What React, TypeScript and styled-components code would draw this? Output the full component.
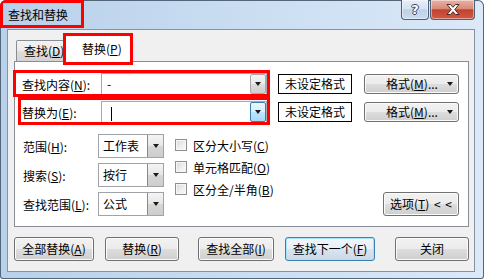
import React from "react";
import styled, { createGlobalStyle, css } from "styled-components";

const GlobalStyle = createGlobalStyle`
  html, body {
    margin: 0;
    padding: 0;
    background: #ffffff;
  }
  body {
    font-family: "Noto Sans CJK SC", "Liberation Sans", sans-serif;
    font-size: 12px;
    color: #000;
  }
  u {
    text-underline-offset: 1px;
  }
`;

// red annotation box drawn over a part of the dialog
const redBox = css<{ $box?: [number, number, number, number] }>`
  position: relative;
  &::after {
    content: "";
    position: absolute;
    pointer-events: none;
    border: 3px solid #ff0000;
    top: ${(p) => (p.$box ? p.$box[0] : -3)}px;
    right: ${(p) => (p.$box ? p.$box[1] : -3)}px;
    bottom: ${(p) => (p.$box ? p.$box[2] : -3)}px;
    left: ${(p) => (p.$box ? p.$box[3] : -3)}px;
  }
`;

const buttonFace = css`
  box-sizing: border-box;
  border: 1px solid #707070;
  border-radius: 3px;
  background: linear-gradient(
    180deg,
    #f2f2f2 0%,
    #ebebeb 50%,
    #dddddd 51%,
    #cfcfcf 100%
  );
  box-shadow: inset 0 0 0 1px #fbfbfb;
`;

const Window = styled.div`
  width: 484px;
  height: 279px;
  box-sizing: border-box;
  display: flex;
  flex-direction: column;
  background: linear-gradient(90deg, #b8d0ea 0%, #c8dcf1 45%, #dbe9f8 100%);
  box-shadow: inset 0 0 0 1px #55657a;
  border-radius: 6px 6px 3px 3px;
  overflow: hidden;
`;

const TitleBar = styled.div`
  height: 29px;
  display: flex;
  justify-content: space-between;
  align-items: flex-start;
`;

const Title = styled.div`
  box-sizing: border-box;
  width: 84px;
  height: 28px;
  border: 3px solid #ff0000;
  padding-left: 5px;
  line-height: 23px;
  font-size: 12px;
  color: #000;
`;

const CaptionButtons = styled.div`
  display: flex;
  gap: 1px;
  margin-right: 9px;
`;

const CaptionButton = styled.div<{ $close?: boolean }>`
  box-sizing: border-box;
  width: ${(p) => (p.$close ? 45 : 28)}px;
  height: 20px;
  border: 1px solid #4f5f73;
  border-top: none;
  border-radius: 0 0 4px 4px;
  display: flex;
  align-items: center;
  justify-content: center;
  background: ${(p) =>
    p.$close
      ? "linear-gradient(180deg, #e9b1a5 0%, #d98b7a 45%, #c4422e 52%, #cf5a44 100%)"
      : "linear-gradient(180deg, #e6eef8 0%, #d6e3f2 45%, #bfd1e7 52%, #cbdcee 100%)"};
  box-shadow: inset 0 0 0 1px rgba(255, 255, 255, 0.45);
`;

const HelpGlyph = styled.span`
  font-family: "DejaVu Sans", sans-serif;
  font-weight: bold;
  font-size: 13px;
  line-height: 14px;
  color: #ffffff;
  text-shadow: 1px 0 0 #3a4658, -1px 0 0 #3a4658, 0 1px 0 #3a4658,
    0 -1px 0 #3a4658;
`;

const Client = styled.div`
  flex: 1;
  margin: 0 9px 7px 7px;
  box-sizing: border-box;
  background: #f0f0f0;
  border: 1px solid #8494a8;
  padding: 0 5px 0 6px;
  display: flex;
  flex-direction: column;
`;

const TabStrip = styled.div`
  height: 31px;
  display: flex;
  align-items: flex-end;
  padding-left: 2px;
`;

const Tab = styled.div<{ $active?: boolean }>`
  box-sizing: border-box;
  border: 1px solid #898c95;
  border-bottom: none;
  border-radius: 2px 2px 0 0;
  white-space: nowrap;
  ${(p) =>
    p.$active
      ? css`
          width: 66px;
          height: 27px;
          margin-left: -2px;
          margin-bottom: -1px;
          padding-left: 16px;
          line-height: 26px;
          background: #ffffff;
          z-index: 1;
          ${redBox}
        `
      : css`
          width: 51px;
          height: 21px;
          padding-left: 7px;
          line-height: 20px;
          overflow: hidden;
          background: linear-gradient(180deg, #f3f3f3 0%, #ebebeb 50%, #dedede 51%, #d3d3d3 100%);
        `}
`;

const Panel = styled.div`
  box-sizing: border-box;
  height: 166px;
  background: #ffffff;
  border: 1px solid #898c95;
  padding: 11px 9px 0 1px;
  display: flex;
  flex-direction: column;
`;

const FindRow = styled.div<{ $gap?: number }>`
  display: flex;
  align-items: center;
  height: 22px;
  margin-top: ${(p) => p.$gap ?? 0}px;
`;

const Field = styled.div<{ $box?: [number, number, number, number] }>`
  box-sizing: border-box;
  width: 251px;
  height: 22px;
  padding-left: 6px;
  display: flex;
  align-items: center;
  ${redBox}
`;

const FieldLabel = styled.span`
  width: 79px;
  white-space: nowrap;
`;

const Combo = styled.div`
  flex: 1;
  box-sizing: border-box;
  height: 22px;
  border: 1px solid #a6abb3;
  background: #ffffff;
  display: flex;
  align-items: center;
`;

const ComboText = styled.span`
  flex: 1;
  padding-left: 5px;
  line-height: 18px;
`;

const Caret = styled.span`
  display: inline-block;
  width: 1px;
  height: 14px;
  margin-left: 4px;
  background: #000;
  vertical-align: middle;
`;

const ArrowBox = styled.div<{ $hot?: boolean }>`
  box-sizing: border-box;
  width: 16px;
  height: 100%;
  display: flex;
  align-items: center;
  justify-content: center;
  border: 1px solid ${(p) => (p.$hot ? "#3c7fb1" : "#a9a9a9")};
  border-radius: 2px;
  background: ${(p) =>
    p.$hot
      ? "linear-gradient(180deg, #eaf6fd 0%, #d9f0fc 50%, #bee6fd 51%, #a7d9f5 100%)"
      : "linear-gradient(180deg, #f2f2f2 0%, #ebebeb 50%, #dddddd 51%, #cfcfcf 100%)"};
`;

const Triangle = styled.span`
  width: 0;
  height: 0;
  border-left: 3.5px solid transparent;
  border-right: 3.5px solid transparent;
  border-top: 4px solid #1a1a1a;
`;

const FormatState = styled.div`
  box-sizing: border-box;
  width: 74px;
  height: 20px;
  margin-left: 11px;
  border: 1px solid #000;
  background: #ffffff;
  text-align: center;
  line-height: 18px;
  white-space: nowrap;
`;

const FormatButton = styled.div`
  ${buttonFace}
  width: 95px;
  height: 20px;
  margin-left: 12px;
  display: flex;
  align-items: center;
  padding: 0 5px 0 12px;
  white-space: nowrap;
`;

const FormatText = styled.span`
  flex: 1;
  text-align: center;
  line-height: 18px;
`;

const OptionsArea = styled.div`
  display: flex;
  margin-top: 11px;
`;

const ScopeGrid = styled.div`
  display: grid;
  grid-template-columns: 75px 66px;
  grid-auto-rows: 24px;
  row-gap: 5px;
  align-items: center;
  padding-left: 7px;
`;

const Select = styled.div`
  box-sizing: border-box;
  height: 24px;
  border: 1px solid #a0a3a8;
  background: #ffffff;
  display: flex;
  align-items: stretch;
`;

const SelectText = styled.span`
  flex: 1;
  padding-left: 4px;
  line-height: 22px;
  white-space: nowrap;
`;

const SelectArrow = styled.div`
  width: 15px;
  display: flex;
  align-items: center;
  justify-content: center;
  border-left: 1px solid #8a8a8a;
  background: linear-gradient(180deg, #f4f4f4 0%, #e6e6e6 50%, #d6d6d6 51%, #cdcdcd 100%);
`;

const CheckList = styled.div`
  display: flex;
  flex-direction: column;
  margin-left: 11px;
`;

const CheckRow = styled.label`
  display: flex;
  align-items: center;
  gap: 6px;
  height: 22px;
  white-space: nowrap;
`;

const CheckBox = styled.span`
  box-sizing: border-box;
  width: 12px;
  height: 12px;
  border: 1px solid #8e8f8f;
  background: linear-gradient(135deg, #d8d8d8 0%, #f0f0f0 60%, #fbfbfb 100%);
  box-shadow: inset 0 0 0 1px #f6f6f6;
`;

const OptionsButton = styled.div`
  ${buttonFace}
  align-self: flex-end;
  margin-left: auto;
  width: 76px;
  height: 24px;
  line-height: 22px;
  text-align: center;
  white-space: nowrap;
  word-spacing: 2px;
`;

const ButtonRow = styled.div`
  display: flex;
  margin-top: 10px;
`;

const DialogButton = styled.div<{ $w: number; $gap?: number; $focus?: boolean }>`
  ${buttonFace}
  width: ${(p) => p.$w}px;
  height: 24px;
  margin-left: ${(p) => p.$gap ?? 0}px;
  line-height: 22px;
  text-align: center;
  white-space: nowrap;
  ${(p) =>
    p.$focus &&
    css`
      border-color: #3c7fb1;
      box-shadow: inset 0 0 0 1px #a9e0fb;
      background: linear-gradient(180deg, #f0f6fa 0%, #e8f0f6 50%, #d8e4ee 51%, #ccdae6 100%);
    `}
`;

const CloseIcon = () => (
  <svg width="14" height="11" viewBox="0 0 14 11">
    <polygon
      points="1,0.5 4.5,0.5 7,3.3 9.5,0.5 13,0.5 8.8,5.5 13,10.5 9.5,10.5 7,7.7 4.5,10.5 1,10.5 5.2,5.5"
      fill="#ffffff"
      stroke="#4a2a26"
      strokeWidth="1"
      strokeLinejoin="round"
    />
  </svg>
);

const App = () => {
  return (
    <>
      <GlobalStyle />
      <Window>
        <TitleBar>
          <Title>查找和替换</Title>
          <CaptionButtons>
            <CaptionButton>
              <HelpGlyph>?</HelpGlyph>
            </CaptionButton>
            <CaptionButton $close>
              <CloseIcon />
            </CaptionButton>
          </CaptionButtons>
        </TitleBar>
        <Client>
          <TabStrip>
            <Tab>
              查找(<u>D</u>)
            </Tab>
            <Tab $active>
              替换(<u>P</u>)
            </Tab>
          </TabStrip>
          <Panel>
            <FindRow>
              <Field $box={[-3, -3, -2, -3]}>
                <FieldLabel>
                  查找内容(<u>N</u>):
                </FieldLabel>
                <Combo>
                  <ComboText>-</ComboText>
                  <ArrowBox>
                    <Triangle />
                  </ArrowBox>
                </Combo>
              </Field>
              <FormatState>未设定格式</FormatState>
              <FormatButton>
                <FormatText>
                  格式(<u>M</u>)...
                </FormatText>
                <Triangle />
              </FormatButton>
            </FindRow>
            <FindRow $gap={6}>
              <Field $box={[-4, -3, -2, 2]}>
                <FieldLabel>
                  替换为(<u>E</u>):
                </FieldLabel>
                <Combo>
                  <ComboText>
                    <Caret />
                  </ComboText>
                  <ArrowBox $hot>
                    <Triangle />
                  </ArrowBox>
                </Combo>
              </Field>
              <FormatState>未设定格式</FormatState>
              <FormatButton>
                <FormatText>
                  格式(<u>M</u>)...
                </FormatText>
                <Triangle />
              </FormatButton>
            </FindRow>
            <OptionsArea>
              <ScopeGrid>
                <span>
                  范围(<u>H</u>):
                </span>
                <Select>
                  <SelectText>工作表</SelectText>
                  <SelectArrow>
                    <Triangle />
                  </SelectArrow>
                </Select>
                <span>
                  搜索(<u>S</u>):
                </span>
                <Select>
                  <SelectText>按行</SelectText>
                  <SelectArrow>
                    <Triangle />
                  </SelectArrow>
                </Select>
                <span>
                  查找范围(<u>L</u>):
                </span>
                <Select>
                  <SelectText>公式</SelectText>
                  <SelectArrow>
                    <Triangle />
                  </SelectArrow>
                </Select>
              </ScopeGrid>
              <CheckList>
                <CheckRow>
                  <CheckBox />
                  <span>
                    区分大小写(<u>C</u>)
                  </span>
                </CheckRow>
                <CheckRow>
                  <CheckBox />
                  <span>
                    单元格匹配(<u>O</u>)
                  </span>
                </CheckRow>
                <CheckRow>
                  <CheckBox />
                  <span>
                    区分全/半角(<u>B</u>)
                  </span>
                </CheckRow>
              </CheckList>
              <OptionsButton>
                选项(<u>T</u>) &lt; &lt;
              </OptionsButton>
            </OptionsArea>
          </Panel>
          <ButtonRow>
            <DialogButton $w={80}>
              全部替换(<u>A</u>)
            </DialogButton>
            <DialogButton $w={74} $gap={11}>
              替换(<u>R</u>)
            </DialogButton>
            <DialogButton $w={76} $gap={19}>
              查找全部(<u>I</u>)
            </DialogButton>
            <DialogButton $w={90} $gap={11} $focus>
              查找下一个(<u>F</u>)
            </DialogButton>
            <DialogButton $w={74} $gap={20}>
              关闭
            </DialogButton>
          </ButtonRow>
        </Client>
      </Window>
    </>
  );
};

export default App;
